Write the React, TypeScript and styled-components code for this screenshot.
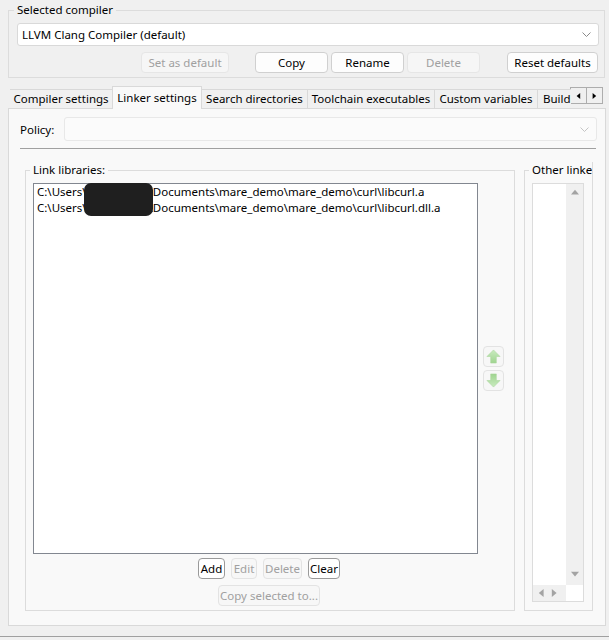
import React from "react";
import styled, { createGlobalStyle } from "styled-components";

const GlobalStyle = createGlobalStyle`
  html, body { margin: 0; padding: 0; background: #f0f0f0; }
  body {
    font-family: "Noto Sans", "Segoe UI", sans-serif;
    font-size: 11.5px;
    color: #000;
  }
`;

const Window = styled.div`
  width: 609px;
  height: 640px;
  overflow: hidden;
  display: flex;
  flex-direction: column;
  background: #f0f0f0;
`;

// group boxes
const Group = styled.fieldset`
  margin: 0;
  padding: 5px 5px 4px 7px;
  border: 1px solid #dcdcdc;
  min-width: 0;
  box-sizing: border-box;
  display: flex;
  flex-direction: column;
`;

const Legend = styled.legend`
  padding: 0 3px;
  margin-left: -3px;
  line-height: 16px;
  white-space: nowrap;
`;

const TopGroup = styled(Group)`
  margin: 2px 4px 0 8px;
  padding-left: 8px;
`;

// combo boxes
const Combo = styled.div<{ $disabled?: boolean }>`
  height: 23px;
  flex: none;
  box-sizing: border-box;
  display: flex;
  align-items: center;
  justify-content: space-between;
  padding: 0 7px 0 4px;
  border: 1px solid ${p => (p.$disabled ? "#e8e8e8" : "#d9d9d9")};
  border-radius: 3px;
  background: ${p => (p.$disabled ? "#fbfbfb" : "#ffffff")};
`;

const Chevron = ({ light }: { light?: boolean }) => (
  <svg width="9" height="5" viewBox="0 0 9 5">
    <polyline points="0.5,0.5 4.5,4.5 8.5,0.5" fill="none" stroke={light ? "#c4c4c4" : "#8a8a8a"} strokeWidth="1" />
  </svg>
);

const ButtonRow = styled.div`
  display: flex;
  justify-content: flex-end;
  align-items: center;
  margin-top: 6px;
  padding-right: 1px;
`;

const Button = styled.button<{ $w: number; $gap?: number }>`
  width: ${p => p.$w}px;
  height: 21px;
  margin-left: ${p => p.$gap ?? 3}px;
  padding: 0;
  font: inherit;
  color: #000;
  background: #fdfdfd;
  border: 1px solid #d0d0d0;
  border-radius: 4px;
  box-sizing: border-box;

  &:disabled {
    color: #a0a0a0;
    background: #f6f6f6;
    border-color: #e6e6e6;
  }
`;

// tabs
const TabBar = styled.div`
  display: flex;
  align-items: flex-start;
  height: 23px;
  margin: 8px 0 0 10px;
`;

const TabClip = styled.div`
  display: flex;
  align-items: flex-end;
  width: 561px;
  height: 23px;
  overflow: hidden;
`;

const Tab = styled.div<{ $w: number; $active?: boolean; $clipped?: boolean }>`
  flex: none;
  position: relative;
  z-index: ${p => (p.$active ? 2 : 1)};
  width: ${p => p.$w}px;
  height: ${p => (p.$active ? 24 : 20)}px;
  margin-bottom: ${p => (p.$active ? -1 : 0)}px;
  box-sizing: border-box;
  display: flex;
  align-items: center;
  justify-content: ${p => (p.$clipped ? "flex-start" : "center")};
  padding-left: ${p => (p.$clipped ? 5 : 0)}px;
  padding-bottom: ${p => (p.$active ? 3 : 1)}px;
  white-space: nowrap;
  overflow: hidden;
  border: 1px solid #d9d9d9;
  border-bottom: ${p => (p.$active ? "none" : "1px solid #d9d9d9")};
  margin-left: -1px;
  background: ${p => (p.$active ? "#f9f9f9" : "#f0f0f0")};
`;

const TabScroll = styled.div`
  display: flex;
  margin-top: 1px;
`;

const ScrollBtn = styled.div`
  width: 17px;
  height: 17px;
  box-sizing: border-box;
  border: 1px solid #adadad;
  margin-left: -1px;
  background: #f0f0f0;
  display: flex;
  align-items: center;
  justify-content: center;
`;

const Panel = styled.div`
  margin: -1px 3px 0 8px;
  height: 518px;
  flex: none;
  box-sizing: border-box;
  border: 1px solid #d9d9d9;
  background: #f9f9f9;
  padding: 8px 8px 14px 11px;
  display: flex;
  flex-direction: column;
`;

const PolicyRow = styled.div`
  display: flex;
  align-items: center;
`;

const PolicyLabel = styled.span`
  width: 44px;
  flex: none;
`;

const PolicyCombo = styled(Combo)`
  height: 24px;
  flex: 1;
`;

const Separator = styled.div`
  margin: 7px 1px 0 0;
  height: 1px;
  flex: none;
  background: #a0a0a0;
`;

const GroupsRow = styled.div`
  flex: 1;
  display: flex;
  gap: 9px;
  margin: 13px 0 0 5px;
  min-height: 0;
`;

const LinkGroup = styled(Group)`
  width: 490px;
  flex: none;
  padding-right: 9px;
`;

// the right-hand group is cut off by the page edge in the original dialog
const OtherClip = styled.div`
  width: 68px;
  flex: none;
  overflow: hidden;
  border-right: 1px solid #dcdcdc;
  display: flex;
`;

const OtherGroup = styled(Group)`
  width: 140px;
  flex: none;
  border-right: none;
`;

const ListArea = styled.div`
  flex: 1;
  display: flex;
  align-items: center;
  gap: 5px;
  min-height: 0;
`;

const ListBox = styled.div`
  position: relative;
  width: 445px;
  height: 100%;
  box-sizing: border-box;
  border: 1px solid #828790;
  background: #fff;
  padding: 0 0 0 3px;
`;

const Item = styled.div`
  height: 16px;
  line-height: 16px;
  white-space: nowrap;
`;

const Hidden = styled.span`
  display: inline-block;
  width: 62px;
`;

const Redaction = styled.div`
  position: absolute;
  left: 50px;
  top: -1px;
  width: 69px;
  height: 33px;
  border-radius: 7px;
  background: #1f1f1f;
`;

const MoveButtons = styled.div`
  display: flex;
  flex-direction: column;
  gap: 3px;
`;

const MoveBtn = styled.div`
  width: 21px;
  height: 21px;
  box-sizing: border-box;
  border: 1px solid #e3e3e3;
  border-radius: 4px;
  background: #f7f7f7;
  display: flex;
  align-items: center;
  justify-content: center;
`;

const SmallRow = styled.div<{ $top?: number }>`
  display: flex;
  justify-content: center;
  gap: 6px;
  margin-top: ${p => p.$top ?? 4}px;
`;

const SmallButton = styled.button<{ $w: number }>`
  width: ${p => p.$w}px;
  height: 21px;
  padding: 0;
  font: inherit;
  color: #000;
  background: #fff;
  border: 1px solid #9a9a9a;
  border-radius: 4px;
  box-sizing: border-box;

  &:disabled {
    color: #a0a0a0;
    background: #f7f7f7;
    border-color: #e3e3e3;
  }
`;

const OtherList = styled.div`
  width: 52px;
  flex: 1;
  box-sizing: border-box;
  border: 1px solid #dcdcdc;
  background: #fff;
  display: flex;
  flex-direction: column;
  margin-bottom: 4px;
`;

const OtherBody = styled.div`
  flex: 1;
  display: flex;
`;

const VScroll = styled.div`
  margin-left: auto;
  width: 17px;
  background: #f0f0f0;
  display: flex;
  flex-direction: column;
  justify-content: space-between;
  align-items: center;
  padding: 5px 0 6px;
`;

const HScroll = styled.div`
  height: 16px;
  background: #f0f0f0;
  display: flex;
  align-items: center;
  gap: 5px;
  padding-left: 5px;
  margin-right: 17px;
`;

const Footer = styled.div`
  margin-top: 10px;
  border-top: 1px solid #a0a0a0;
  flex: 1;
  background: #f0f0f0;
`;

const Tri = ({ dir, color = "#a3a3a3", size = 8 }: { dir: "up" | "down" | "left" | "right"; color?: string; size?: number }) => {
  const pts = {
    up: "0,7 5,1 10,7",
    down: "0,1 5,7 10,1",
    left: "7,0 1,5 7,10",
    right: "1,0 7,5 1,10",
  }[dir];
  return (
    <svg width={size} height={size} viewBox="0 0 10 10">
      <polygon points={pts} fill={color} />
    </svg>
  );
};

const GreenArrow = ({ down }: { down?: boolean }) => (
  <svg width="15" height="15" viewBox="0 0 16 16" style={down ? { transform: "rotate(180deg)" } : undefined}>
    <defs>
      <linearGradient id={down ? "gd" : "gu"} x1="0" y1="0" x2="0" y2="1">
        <stop offset="0" stopColor="#c9ebbf" />
        <stop offset="1" stopColor="#9fd48f" />
      </linearGradient>
    </defs>
    <polygon points="8,1 15,8 11,8 11,15 5,15 5,8 1,8" fill={`url(#${down ? "gd" : "gu"})`} stroke="#a9d69c" strokeWidth="0.6" />
  </svg>
);

const libs = ["libcurl.a", "libcurl.dll.a"];

export default function App() {
  return (
    <Window>
      <GlobalStyle />
      <TopGroup>
        <Legend>Selected compiler</Legend>
        <Combo>
          <span>LLVM Clang Compiler (default)</span>
          <Chevron />
        </Combo>
        <ButtonRow>
          <Button $w={88} disabled>Set as default</Button>
          <Button $w={73} $gap={26}>Copy</Button>
          <Button $w={73}>Rename</Button>
          <Button $w={73} disabled>Delete</Button>
          <Button $w={91} $gap={27}>Reset defaults</Button>
        </ButtonRow>
      </TopGroup>

      <TabBar>
        <TabClip>
          <Tab $w={104}>Compiler settings</Tab>
          <Tab $w={90} $active>Linker settings</Tab>
          <Tab $w={107}>Search directories</Tab>
          <Tab $w={128}>Toolchain executables</Tab>
          <Tab $w={104}>Custom variables</Tab>
          <Tab $w={90} $clipped>Build options</Tab>
        </TabClip>
        <TabScroll>
          <ScrollBtn><Tri dir="left" color="#000" size={6} /></ScrollBtn>
          <ScrollBtn><Tri dir="right" color="#000" size={6} /></ScrollBtn>
        </TabScroll>
      </TabBar>

      <Panel>
        <PolicyRow>
          <PolicyLabel>Policy:</PolicyLabel>
          <PolicyCombo $disabled>
            <span />
            <Chevron light />
          </PolicyCombo>
        </PolicyRow>
        <Separator />
        <GroupsRow>
          <LinkGroup>
            <Legend>Link libraries:</Legend>
            <ListArea>
              <ListBox>
                {libs.map(l => (
                  <Item key={l}>
                    C:\Users\<Hidden />\Documents\mare_demo\mare_demo\curl\{l}
                  </Item>
                ))}
                <Redaction />
              </ListBox>
              <MoveButtons>
                <MoveBtn><GreenArrow /></MoveBtn>
                <MoveBtn><GreenArrow down /></MoveBtn>
              </MoveButtons>
            </ListArea>
            <SmallRow>
              <SmallButton $w={27}>Add</SmallButton>
              <SmallButton $w={26} disabled>Edit</SmallButton>
              <SmallButton $w={39} disabled>Delete</SmallButton>
              <SmallButton $w={32}>Clear</SmallButton>
            </SmallRow>
            <SmallRow $top={6}>
              <SmallButton $w={102} disabled>Copy selected to...</SmallButton>
            </SmallRow>
          </LinkGroup>
          <OtherClip>
            <OtherGroup>
              <Legend>Other linker options:</Legend>
              <OtherList>
                <OtherBody>
                  <VScroll>
                    <Tri dir="up" />
                    <Tri dir="down" />
                  </VScroll>
                </OtherBody>
                <HScroll>
                  <Tri dir="left" />
                  <Tri dir="right" />
                </HScroll>
              </OtherList>
            </OtherGroup>
          </OtherClip>
        </GroupsRow>
      </Panel>
      <Footer />
    </Window>
  );
}
